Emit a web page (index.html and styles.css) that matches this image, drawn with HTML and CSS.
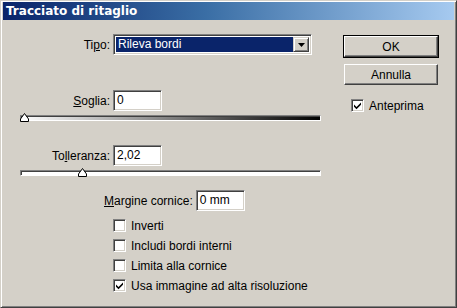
FILE: index.html
```html
<!DOCTYPE html>
<html>
<head>
<meta charset="utf-8">
<link rel="stylesheet" href="styles.css">
</head>
<body>
<div class="window">
  <div class="titlebar"><span class="title">Tracciato di ritaglio</span></div>
  <div class="content">
    <div class="main">
      <div class="field-row row-tipo">
        <label class="lbl">Ti<u>p</u>o:</label>
        <div class="select">
          <span class="select-value">Rileva bordi</span>
          <span class="select-btn">
            <svg width="7" height="4" viewBox="0 0 7 4"><path d="M0 0H7L3.5 4Z" fill="#000"/></svg>
          </span>
        </div>
      </div>

      <div class="field-row row-soglia">
        <label class="lbl"><u>S</u>oglia:</label>
        <div class="input">0</div>
      </div>
      <div class="slider">
        <div class="track track-gradient"></div>
        <svg class="thumb" style="left:0px" width="9" height="9" viewBox="0 0 9 9"><path d="M4.5 0.5L8.5 6V8.5H0.5V6Z" fill="#fff" stroke="#000"/></svg>
      </div>

      <div class="field-row row-toll">
        <label class="lbl">To<u>l</u>leranza:</label>
        <div class="input">2,02</div>
      </div>
      <div class="slider">
        <div class="track track-plain"></div>
        <svg class="thumb" style="left:58px" width="9" height="9" viewBox="0 0 9 9"><path d="M4.5 0.5L8.5 6V8.5H0.5V6Z" fill="#fff" stroke="#000"/></svg>
      </div>

      <div class="margin-row">
        <label class="lbl"><u>M</u>argine cornice:</label>
        <div class="input input-mm">0 mm</div>
      </div>

      <ul class="checks">
        <li class="check"><span class="box"></span><span>Inverti</span></li>
        <li class="check"><span class="box"></span><span>Includi bordi interni</span></li>
        <li class="check"><span class="box"></span><span>Limita alla cornice</span></li>
        <li class="check"><span class="box checked"><svg width="9" height="9" viewBox="0 0 9 9"><path d="M1 3.5L3.5 6L8 1.5V3.8L3.5 8.2L1 5.7Z" fill="#000"/></svg></span><span>Usa immagine ad alta risoluzione</span></li>
      </ul>
    </div>

    <div class="side">
      <button class="btn btn-default">OK</button>
      <button class="btn">Annulla</button>
      <div class="check side-check"><span class="box checked"><svg width="9" height="9" viewBox="0 0 9 9"><path d="M1 3.5L3.5 6L8 1.5V3.8L3.5 8.2L1 5.7Z" fill="#000"/></svg></span><span>Anteprima</span></div>
    </div>
  </div>
</div>
</body>
</html>
```

FILE: styles.css
```css
html, body {
  margin: 0;
  padding: 0;
  background: #d4d0c8;
}

body {
  font-family: "Liberation Sans", Arial, sans-serif;
  font-size: 12px;
  color: #000;
}

.window {
  width: 457px;
  height: 308px;
  box-sizing: border-box;
  background: #d4d0c8;
  border: 1px solid;
  border-color: #d4d0c8 #404040 #404040 #d4d0c8;
  box-shadow: inset 1px 1px #ffffff, inset -1px -1px #808080;
  padding: 0 2px 2px 2px;
  display: flex;
  flex-direction: column;
}

.titlebar {
  height: 18px;
  margin-top: 1px;
  background: linear-gradient(90deg, #0a246a 0%, #3a6ea5 45%, #a6caf0 100%);
  display: flex;
  align-items: center;
  padding-left: 3px;
}

.title {
  color: #fff;
  font-weight: bold;
  font-family: "DejaVu Sans", sans-serif;
  font-size: 12px;
}

.content {
  display: flex;
  flex: 1;
  padding-top: 14px;
}

.main {
  width: 337px;
  display: flex;
  flex-direction: column;
  padding-left: 17px;
  box-sizing: border-box;
}

.field-row {
  display: grid;
  grid-template-columns: 90px auto;
  column-gap: 3px;
  align-items: center;
}

.lbl {
  text-align: right;
  white-space: nowrap;
}

.lbl u {
  text-decoration: underline;
}

.select {
  width: 199px;
  height: 21px;
  box-sizing: border-box;
  border: 1px solid;
  border-color: #808080 #ffffff #ffffff #808080;
  box-shadow: inset 1px 1px #404040, inset -1px -1px #d4d0c8;
  background: #fff;
  display: flex;
  padding: 2px;
}

.select-value {
  flex: 1;
  background: #0a246a;
  color: #fff;
  line-height: 15px;
  padding-left: 2px;
}

.select-btn {
  width: 16px;
  box-sizing: border-box;
  background: #d4d0c8;
  border: 1px solid;
  border-color: #d4d0c8 #404040 #404040 #d4d0c8;
  box-shadow: inset 1px 1px #fff, inset -1px -1px #808080;
  display: flex;
  align-items: center;
  justify-content: center;
}

.input {
  width: 49px;
  height: 21px;
  box-sizing: border-box;
  border: 1px solid;
  border-color: #808080 #ffffff #ffffff #808080;
  box-shadow: inset 1px 1px #404040, inset -1px -1px #d4d0c8;
  background: #fff;
  padding: 0 3px;
  line-height: 19px;
}

.row-soglia {
  margin-top: 35px;
}

.row-toll {
  margin-top: 21px;
}

.slider {
  position: relative;
  width: 301px;
  height: 9px;
  margin-top: 4px;
}

.track {
  height: 6px;
  box-sizing: border-box;
  border: 1px solid;
  border-color: #808080 #ffffff #ffffff #808080;
  box-shadow: inset 1px 1px #404040;
}

.track-gradient {
  background: linear-gradient(90deg, #ffffff, #000000);
}

.track-plain {
  background: #ffffff;
}

.thumb {
  position: absolute;
  top: -2px;
  display: block;
}

.margin-row {
  display: flex;
  align-items: center;
  gap: 3px;
  margin-top: 11px;
  padding-left: 84px;
}

.checks {
  list-style: none;
  margin: 8px 0 0 0;
  padding: 0 0 0 93px;
  display: flex;
  flex-direction: column;
  gap: 7px;
}

.check {
  display: flex;
  align-items: center;
  gap: 5px;
  height: 13px;
}

.box {
  width: 13px;
  height: 13px;
  box-sizing: border-box;
  border: 1px solid;
  border-color: #808080 #ffffff #ffffff #808080;
  box-shadow: inset 1px 1px #404040, inset -1px -1px #d4d0c8;
  background: #fff;
  display: flex;
  align-items: center;
  justify-content: center;
}

.side {
  display: flex;
  flex-direction: column;
  padding-left: 4px;
  padding-top: 2px;
}

.btn {
  width: 94px;
  height: 21px;
  font-family: inherit;
  font-size: 12px;
  background: #d4d0c8;
  border: 1px solid;
  border-color: #ffffff #404040 #404040 #ffffff;
  box-shadow: inset -1px -1px #808080;
  padding: 0;
  color: #000;
}

.btn + .btn {
  margin-top: 7px;
}

.btn-default {
  outline: 1px solid #000;
  outline-offset: 0;
}

.side-check {
  margin-top: 14px;
  padding-left: 7px;
}
```
